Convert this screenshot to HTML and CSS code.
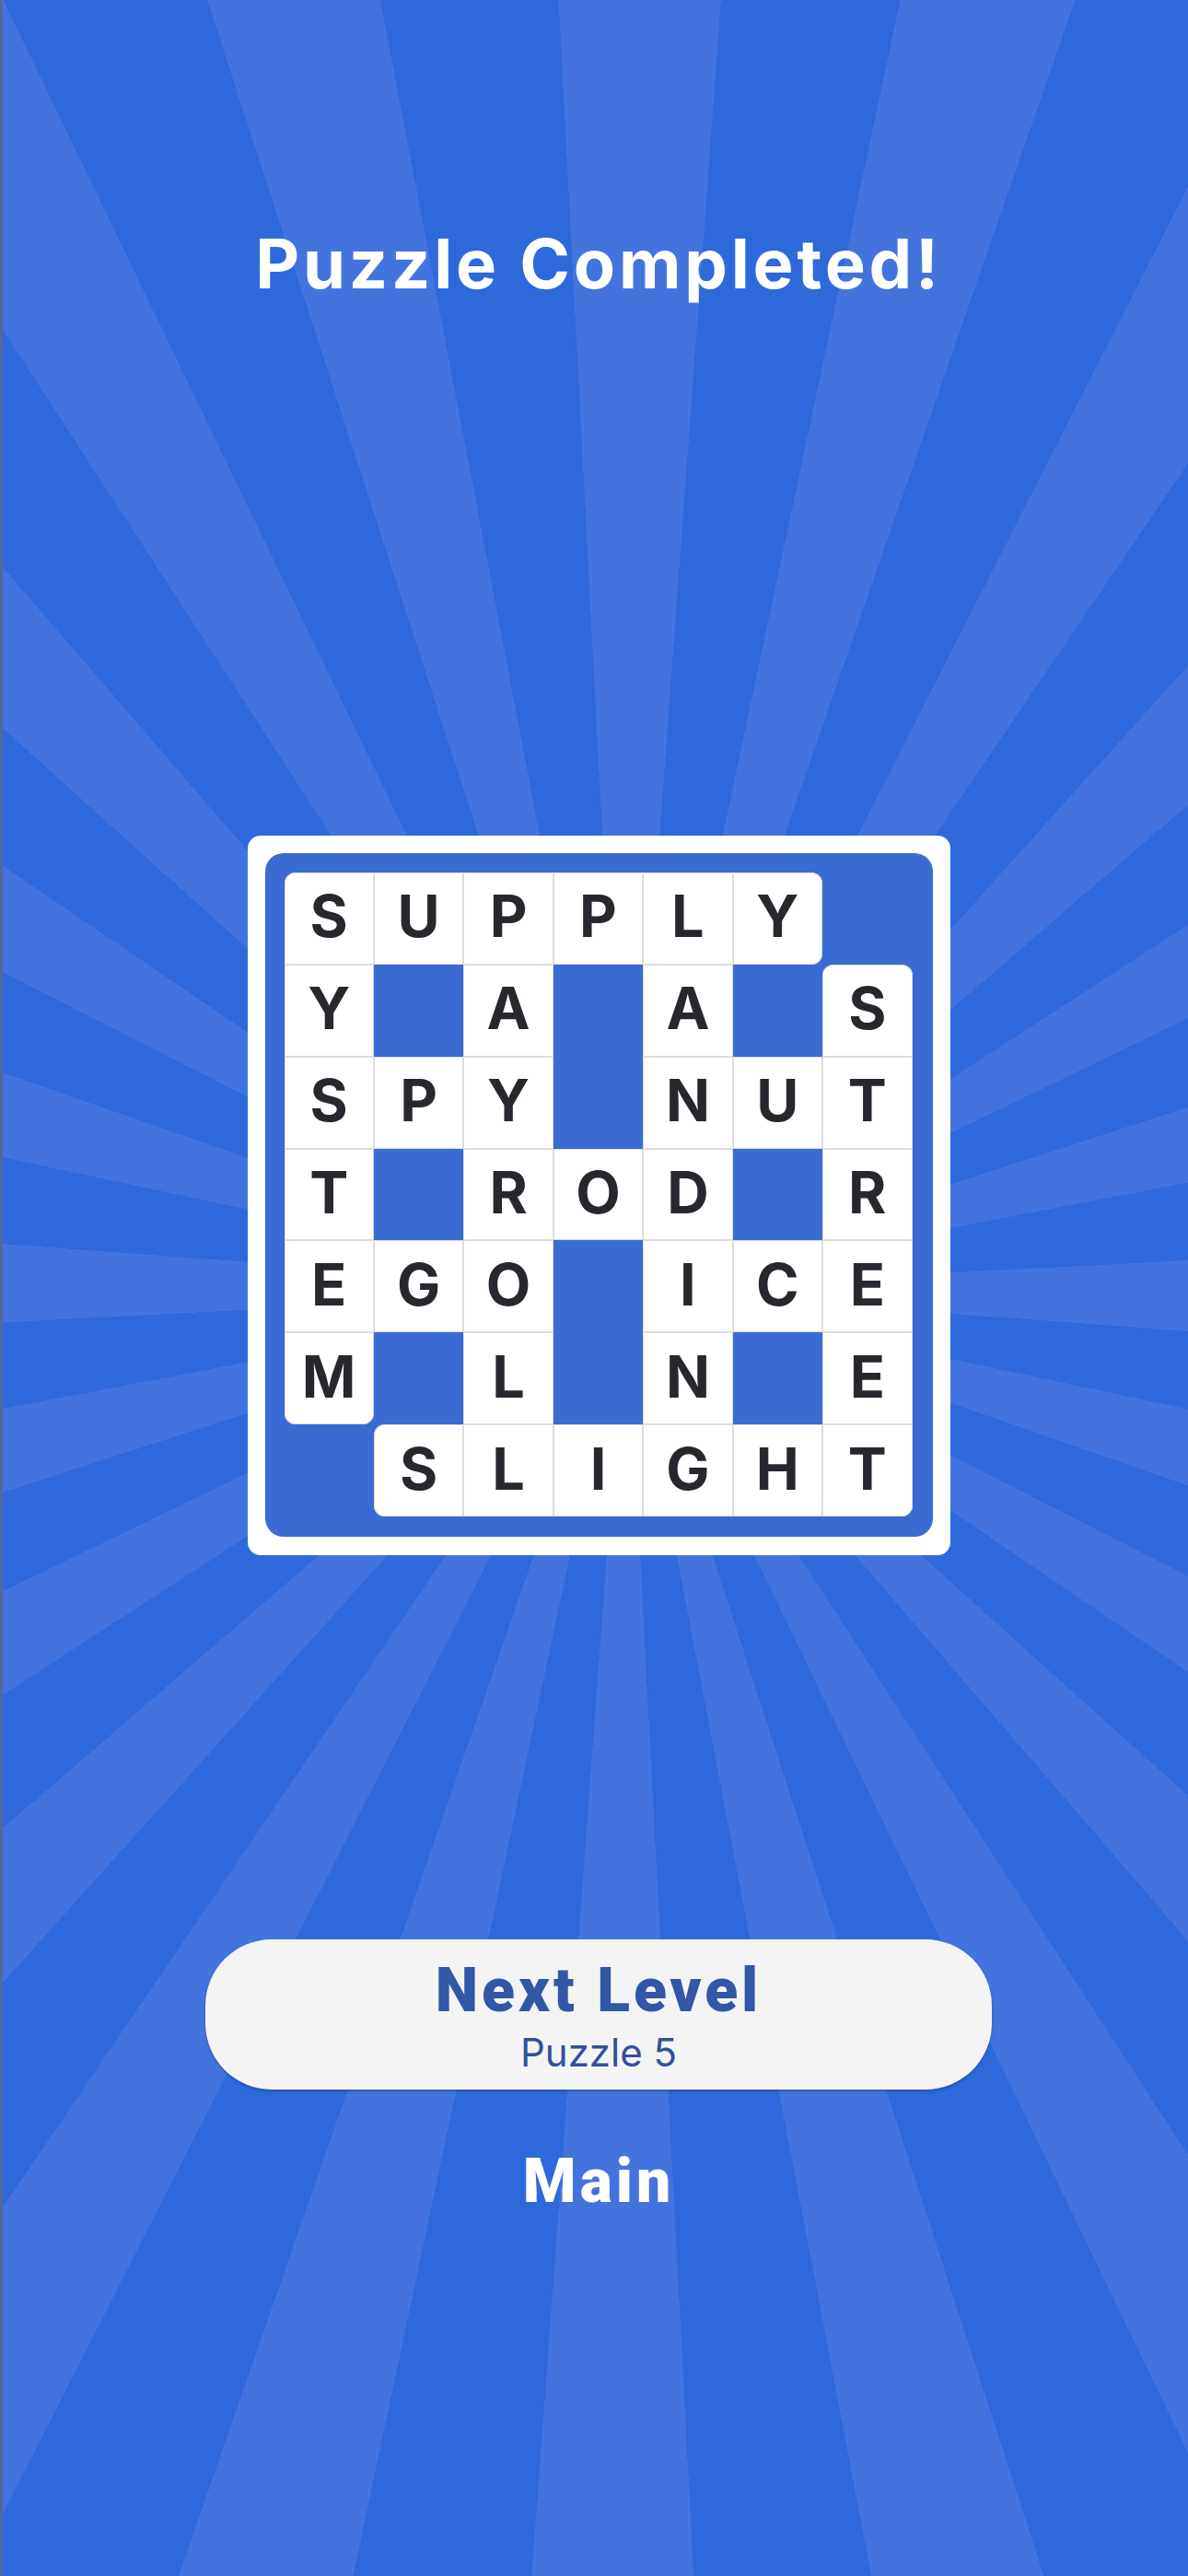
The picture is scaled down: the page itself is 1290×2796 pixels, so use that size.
FILE: index.html
```html
<!DOCTYPE html>
<html lang="en">
<head>
<meta charset="utf-8">
<title>Puzzle Completed</title>
<link rel="stylesheet" href="styles.css">
</head>
<body>
<main class="screen">
  <h1 class="title">Puzzle Completed!</h1>

  <div class="board">
    <div class="board-inner">
      <div class="grid">
        <div class="cell r-tl">S</div><div class="cell">U</div><div class="cell">P</div><div class="cell">P</div><div class="cell">L</div><div class="cell r-tr r-br">Y</div><div class="void"></div>
        <div class="cell">Y</div><div class="void"></div><div class="cell">A</div><div class="void"></div><div class="cell">A</div><div class="void"></div><div class="cell r-tl r-tr">S</div>
        <div class="cell">S</div><div class="cell">P</div><div class="cell">Y</div><div class="void"></div><div class="cell">N</div><div class="cell">U</div><div class="cell">T</div>
        <div class="cell">T</div><div class="void"></div><div class="cell">R</div><div class="cell">O</div><div class="cell">D</div><div class="void"></div><div class="cell">R</div>
        <div class="cell">E</div><div class="cell">G</div><div class="cell">O</div><div class="void"></div><div class="cell">I</div><div class="cell">C</div><div class="cell">E</div>
        <div class="cell r-bl r-br">M</div><div class="void"></div><div class="cell">L</div><div class="void"></div><div class="cell">N</div><div class="void"></div><div class="cell">E</div>
        <div class="void"></div><div class="cell r-tl r-bl">S</div><div class="cell">L</div><div class="cell">I</div><div class="cell">G</div><div class="cell">H</div><div class="cell r-br">T</div>
      </div>
    </div>
  </div>

  <button class="next" type="button">
    <span class="next-label">Next Level</span>
    <span class="next-sub">Puzzle 5</span>
  </button>

  <a class="main-link" href="#">Main</a>
</main>
</body>
</html>
```
FILE: styles.css
```css
* { box-sizing: border-box; }

html, body {
  margin: 0;
  padding: 0;
}

body {
  width: 1290px;
  height: 2796px;
  overflow: hidden;
  background: #2e69db;
}

.screen {
  width: 1290px;
  height: 2796px;
  padding: 249px 0 0 10px;
  display: flex;
  flex-direction: column;
  align-items: center;
  box-shadow: inset 3px 0 0 #52689c;
  background:
    repeating-conic-gradient(from -3deg at 680px 1400px,
      #4374de 0deg 7.2deg,
      #2e69db 7.2deg 15deg);
}

.title {
  margin: 0;
  font-family: "Inter", "Liberation Sans", sans-serif;
  font-weight: 700;
  font-size: 74px;
  line-height: 74px;
  letter-spacing: 3.8px;
  color: #ffffff;
}

.board {
  margin-top: 584px;
  width: 763px;
  height: 781px;
  padding: 19px 19px 20px 19px;
  background: #ffffff;
  border-radius: 14px;
}

.board-inner {
  width: 100%;
  height: 100%;
  padding: 21px 22px 22px 21px;
  background: #3a6bd3;
  border-radius: 20px;
}

.grid {
  display: grid;
  grid-template-columns: repeat(7, 1fr);
  grid-template-rows: repeat(7, 1fr);
  width: 682px;
  height: 699px;
}

.cell {
  display: flex;
  align-items: center;
  justify-content: center;
  background: #ffffff;
  box-shadow: inset 0 0 0 1px #dcdcdc;
  font-family: "Inter", "Liberation Sans", sans-serif;
  font-weight: 700;
  font-size: 63px;
  line-height: 1;
  color: #26282e;
  padding-bottom: 4px;
}

.r-tl { border-top-left-radius: 12px; }
.r-tr { border-top-right-radius: 12px; }
.r-bl { border-bottom-left-radius: 12px; }
.r-br { border-bottom-right-radius: 12px; }

.next {
  margin-top: 417px;
  width: 854px;
  height: 163px;
  border: 0;
  border-radius: 72px;
  background: #f4f4f4;
  box-shadow: 0 2px 3px rgba(20, 40, 90, 0.35);
  display: flex;
  flex-direction: column;
  align-items: center;
  padding: 23px 0 0 0;
  cursor: pointer;
}

.next-label {
  font-family: "Roboto", "Liberation Sans", sans-serif;
  font-weight: 900;
  font-size: 66px;
  line-height: 66px;
  letter-spacing: 4px;
  color: #3157a6;
}

.next-sub {
  margin-top: 13px;
  font-family: "Inter", "Liberation Sans", sans-serif;
  font-weight: 400;
  font-size: 42px;
  line-height: 42px;
  color: #33509a;
}

.main-link {
  margin-top: 67px;
  font-family: "Roboto", "Liberation Sans", sans-serif;
  font-weight: 900;
  font-size: 66px;
  line-height: 66px;
  letter-spacing: 4px;
  color: #ffffff;
  text-decoration: none;
}
```
